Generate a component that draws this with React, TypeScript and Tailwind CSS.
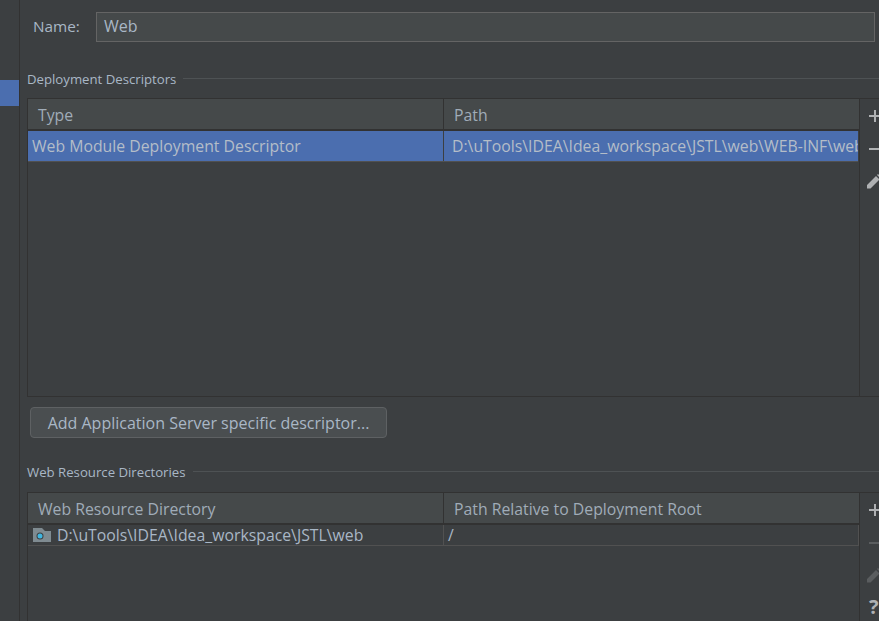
const font = "font-['Open_Sans','Noto_Sans',sans-serif]";

function Plus({ dim }: { dim?: boolean }) {
  return (
    <svg width="14" height="14" viewBox="0 0 14 14" className="block">
      <path d="M6 1h2v5h5v2H8v5H6V8H1V6h5z" fill={dim ? '#5a5d5f' : '#afb1b3'} />
    </svg>
  );
}

function Minus({ dim }: { dim?: boolean }) {
  return (
    <svg width="14" height="14" viewBox="0 0 14 14" className="block">
      <path d="M1 6h12v2H1z" fill={dim ? '#5a5d5f' : '#afb1b3'} />
    </svg>
  );
}

function Pencil({ dim }: { dim?: boolean }) {
  return (
    <svg width="16" height="16" viewBox="0 0 16 16" className="block -ml-px">
      <path d="M0 11 9 2l3.5 3.5-9 9H0z M10 1l1-1 3.5 3.5-1 1z" fill={dim ? '#5a5d5f' : '#afb1b3'} />
    </svg>
  );
}

function ToolButton({ children }: { children: React.ReactNode }) {
  return <div className="h-[33px] flex items-center">{children}</div>;
}

function SectionTitle({ label }: { label: string }) {
  return (
    <div className="flex pl-[7px] h-[18px]">
      <span className="text-[13.2px] leading-[18px] text-[#a9b7c6] whitespace-nowrap">{label}</span>
      <div className="flex-1 h-px mt-[8px] ml-[7px] bg-[#4e5254]" />
    </div>
  );
}

function HeaderCell({ label, className }: { label: string; className: string }) {
  return (
    <div className={`flex items-center h-full pt-[4px] text-[15.8px] text-[#a0acb8] whitespace-nowrap overflow-hidden ${className}`}>
      {label}
    </div>
  );
}

export default function App() {
  return (
    <div className={`w-[879px] h-[621px] overflow-hidden flex bg-[#3c3f41] ${font}`}>
      {/* Left: settings tree */}
      <aside className="w-[20px] shrink-0 border-r border-[#323232] pt-[80px]">
        <div className="h-[26px] bg-[#4b6eaf]" />
      </aside>

      <main className="flex-1 min-w-0 flex flex-col">
        {/* Name */}
        <div className="flex items-center pt-[12px] pl-[13px] pr-[4px]">
          <span className="w-[63px] -translate-y-[1px] text-[15.3px] text-[#a9b7c6]">Name:</span>
          <div className="flex-1 h-[30px] flex items-center px-[7px] pb-[3px] bg-[#45494a] border border-[#646464] text-[16px] text-[#a9b7c6]">
            Web
          </div>
        </div>

        <div className="mt-[28px]">
          <SectionTitle label="Deployment Descriptors" />
        </div>

        {/* Deployment descriptors table */}
        <div className="mt-[10px] ml-[7px] h-[299px] flex border-y border-l border-[#323232]">
          <div className="w-[831px] shrink-0 flex flex-col">
            <div className="h-[32px] shrink-0 flex bg-[#45494a] border-b-2 border-[#323232]">
              <HeaderCell label="Type" className="w-[416px] pl-[10px] border-r border-[#323232]" />
              <HeaderCell label="Path" className="flex-1 pl-[10px]" />
            </div>
            <div className="h-[31px] shrink-0 flex mr-px bg-[#4b6eaf] border-b border-[#515151] text-[15.8px] text-[#b4bdc8] whitespace-nowrap overflow-hidden">
              <div className="w-[416px] shrink-0 pl-[4px] pt-[2px] flex items-center border-r border-[#3c3f41]">
                Web Module Deployment Descriptor
              </div>
              <div className="flex-1 min-w-0 pl-[8px] pt-[2px] flex items-center overflow-hidden">
                D:\uTools\IDEA\Idea_workspace\JSTL\web\WEB-INF\web.xml
              </div>
            </div>
          </div>
          <div className="flex-1 border-l border-[#323232] flex flex-col items-start pl-[8px]">
            <ToolButton><Plus /></ToolButton>
            <ToolButton><Minus /></ToolButton>
            <ToolButton><Pencil /></ToolButton>
          </div>
        </div>

        {/* Button */}
        <div className="mt-[10px] ml-[10px]">
          <button className="w-[357px] h-[31px] rounded-[4px] bg-[#4a4e50] border border-[#5e6163] text-[16px] leading-[20px] text-[#a9b7c6] whitespace-nowrap">
            Add Application Server specific descriptor...
          </button>
        </div>

        <div className="mt-[25px]">
          <SectionTitle label="Web Resource Directories" />
        </div>

        {/* Web resource directories table */}
        <div className="mt-[11px] ml-[7px] flex-1 flex border-t border-l border-[#323232]">
          <div className="w-[831px] shrink-0 flex flex-col">
            <div className="h-[32px] shrink-0 flex bg-[#45494a] border-b-2 border-[#323232]">
              <HeaderCell label="Web Resource Directory" className="w-[416px] pl-[10px] border-r border-[#323232]" />
              <HeaderCell label="Path Relative to Deployment Root" className="flex-1 pl-[10px]" />
            </div>
            <div className="h-[21px] shrink-0 flex border-b border-[#515151] border-r text-[15.8px] text-[#a9b7c6] whitespace-nowrap">
              <div className="w-[416px] shrink-0 pl-[5px] pt-[2px] flex items-center gap-[6px] border-r border-[#515151]">
                <svg width="18" height="14" viewBox="0 0 18 14" className="shrink-0 -mt-[3px]">
                  <path d="M0 0h9l3 3h6v11H0z" fill="#7f8b91" />
                  <circle cx="7" cy="8" r="3.5" fill="#3c3f41" />
                  <circle cx="7" cy="8" r="2.5" fill="#40b6e0" />
                </svg>
                D:\uTools\IDEA\Idea_workspace\JSTL\web
              </div>
              <div className="flex-1 pl-[4px] pt-[2px] flex items-center">/</div>
            </div>
          </div>
          <div className="flex-1 border-l border-[#323232] flex flex-col items-start pl-[8px]">
            <ToolButton><Plus /></ToolButton>
            <ToolButton><Minus dim /></ToolButton>
            <ToolButton><Pencil dim /></ToolButton>
            <div className="h-[28px] pt-[2px] ml-px flex items-center text-[20px] leading-[20px] font-bold text-[#afb1b3]">?</div>
          </div>
        </div>
      </main>
    </div>
  );
}
